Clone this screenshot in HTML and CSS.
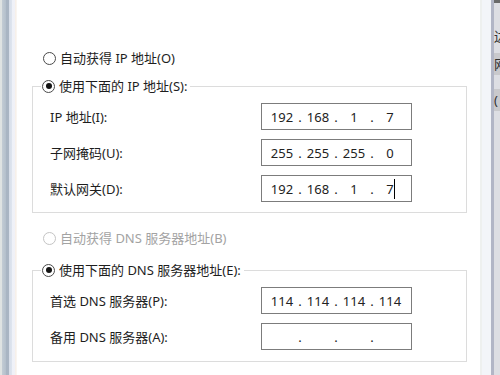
FILE: index.html
```html
<!DOCTYPE html>
<html lang="zh-CN">
<head>
<meta charset="utf-8">
<title>IPv4 属性</title>
<link rel="stylesheet" href="styles.css">
</head>
<body>
<div class="screen">
  <div class="edge-left"></div>
  <div class="main">
    <div class="radio-row">
      <span class="radio"></span>
      <span>自动获得 IP 地址(O)</span>
    </div>
    <fieldset class="group group-ip">
      <legend class="legend">
        <span class="radio checked"></span>
        <span>使用下面的 IP 地址(S):</span>
      </legend>
      <div class="rows">
        <div class="row">
          <span class="label">IP 地址(I):</span>
          <div class="ipbox"><span class="f">192</span><span class="d">.</span><span class="f">168</span><span class="d">.</span><span class="f">1</span><span class="d">.</span><span class="f">7</span></div>
        </div>
        <div class="row">
          <span class="label">子网掩码(U):</span>
          <div class="ipbox"><span class="f">255</span><span class="d">.</span><span class="f">255</span><span class="d">.</span><span class="f">255</span><span class="d">.</span><span class="f">0</span></div>
        </div>
        <div class="row">
          <span class="label">默认网关(D):</span>
          <div class="ipbox"><span class="f">192</span><span class="d">.</span><span class="f">168</span><span class="d">.</span><span class="f">1</span><span class="d">.</span><span class="f caret-field">7<span class="caret"></span></span></div>
        </div>
      </div>
    </fieldset>
    <div class="radio-row disabled spaced">
      <span class="radio"></span>
      <span>自动获得 DNS 服务器地址(B)</span>
    </div>
    <fieldset class="group group-dns">
      <legend class="legend">
        <span class="radio checked"></span>
        <span>使用下面的 DNS 服务器地址(E):</span>
      </legend>
      <div class="rows">
        <div class="row">
          <span class="label">首选 DNS 服务器(P):</span>
          <div class="ipbox"><span class="f">114</span><span class="d">.</span><span class="f">114</span><span class="d">.</span><span class="f">114</span><span class="d">.</span><span class="f">114</span></div>
        </div>
        <div class="row">
          <span class="label">备用 DNS 服务器(A):</span>
          <div class="ipbox"><span class="f"></span><span class="d">.</span><span class="f"></span><span class="d">.</span><span class="f"></span><span class="d">.</span><span class="f"></span></div>
        </div>
      </div>
    </fieldset>
  </div>
  <div class="edge-right">
    <div class="er-a"></div>
    <div class="er-b"></div>
    <div class="er-c"></div>
    <div class="er-d">
      <div class="bg-top"></div>
      <div class="bg-ch">边</div>
      <div class="bg-ch gray">网</div>
      <div class="bg-gap"></div>
      <div class="bg-ch gray">(</div>
    </div>
  </div>
</div>
</body>
</html>
```
FILE: styles.css
```css
html, body {
  margin: 0;
  padding: 0;
  background: #ffffff;
}

body {
  font-family: "Noto Sans", "Noto Sans CJK SC", sans-serif;
  font-size: 13px;
  color: #1e1e1e;
}

.screen {
  width: 500px;
  height: 375px;
  overflow: hidden;
  display: flex;
}

.edge-left {
  width: 17px;
  flex: none;
  background: linear-gradient(to right,
    #dfe3e2 0px, #dfe3e2 2px,
    #c3ccd4 2px, #b3bfcb 6px,
    #a9b5c3 6px, #a9b5c3 9px,
    #d6dde8 9px, #dfe5ef 12px,
    #eef1f8 12px, #f1f1f7 15px,
    #f5ede6 15px, #fbf8f5 17px);
}

.main {
  flex: 1;
  padding: 50px 13px 0 15px;
  display: flex;
  flex-direction: column;
}

.radio-row {
  height: 16px;
  display: flex;
  align-items: center;
  gap: 4px;
  padding-left: 11px;
  line-height: 16px;
  white-space: nowrap;
}

.radio-row.spaced {
  margin-top: 17px;
}

.radio-row.disabled {
  color: #a3a3a3;
}

.radio {
  width: 13px;
  height: 13px;
  box-sizing: border-box;
  border: 1px solid #4a4a4a;
  border-radius: 50%;
  background: #ffffff;
  flex: none;
  display: flex;
  align-items: center;
  justify-content: center;
}

.disabled .radio {
  border-color: #c4c4c4;
}

.radio.checked::after {
  content: "";
  width: 6px;
  height: 6px;
  border-radius: 50%;
  background: #141414;
}

.group {
  margin: 0;
  border: 1px solid #dcdcdc;
  padding: 9px 0 10px 17px;
  min-width: 0;
}

.group-ip {
  margin-top: 12px;
}

.group-dns {
  margin-top: 16px;
  padding-bottom: 11px;
}

.legend {
  margin-left: -9px;
  padding: 0 3px 0 1px;
  height: 16px;
  line-height: 16px;
  display: flex;
  align-items: center;
  gap: 4px;
  white-space: nowrap;
}

.rows {
  display: flex;
  flex-direction: column;
  gap: 9px;
}

.row {
  display: grid;
  grid-template-columns: 211px 151px;
  align-items: center;
  white-space: nowrap;
}

.ipbox {
  height: 27px;
  box-sizing: border-box;
  border: 1px solid #7c7c7c;
  background: #ffffff;
  display: flex;
  align-items: center;
  padding-left: 5px;
  color: #222222;
}

.f {
  width: 30px;
  text-align: center;
  line-height: 18px;
  height: 18px;
  position: relative;
}

.d {
  width: 6px;
  text-align: center;
  line-height: 18px;
}

.caret-field .caret {
  position: absolute;
  top: -1px;
  left: 19px;
  width: 1px;
  height: 20px;
  background: #000000;
}

.edge-right {
  width: 20px;
  flex: none;
  display: flex;
}

.er-a {
  width: 2px;
  background: #eef0ef;
}

.er-b {
  width: 9px;
  background: #f3f5f9;
}

.er-c {
  width: 3px;
  background: #b2b6c6;
}

.er-d {
  width: 6px;
  background: #dddee3;
  overflow: hidden;
  display: flex;
  flex-direction: column;
}

.bg-top {
  height: 3px;
  background: #6a6a6a;
  flex: none;
}

.bg-ch {
  height: 22px;
  line-height: 22px;
  font-size: 13px;
  color: #333333;
  margin-top: 22px;
  white-space: nowrap;
  flex: none;
}

.bg-ch.gray {
  background: #c9c9cc;
  margin-top: 6px;
}

.bg-gap {
  height: 8px;
  flex: none;
}
```
